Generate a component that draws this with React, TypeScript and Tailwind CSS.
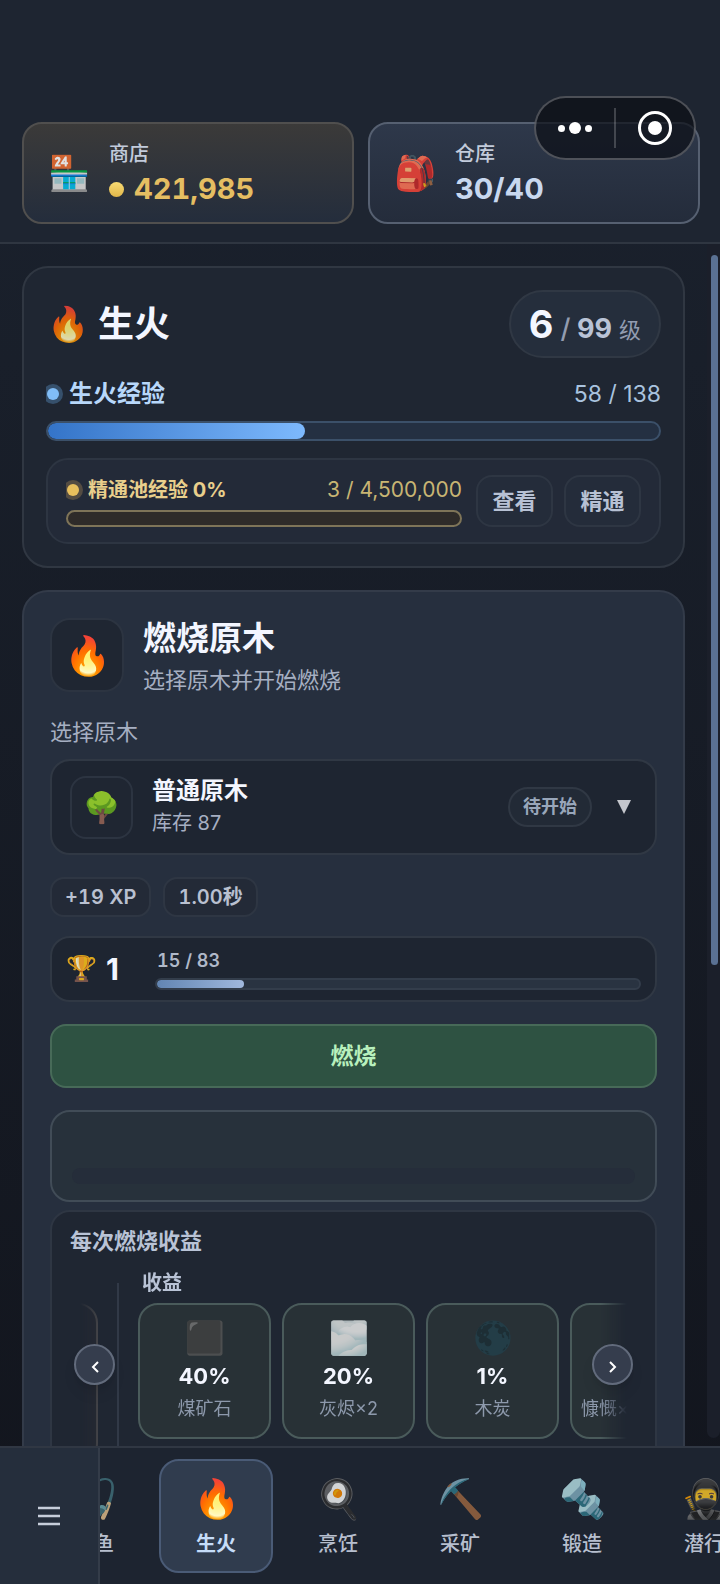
import { useState } from "react";
import { clsx } from "clsx";

type Reward = { icon?: string; chance?: string; name: string };
type Skill = { icon: string; name: string };

const rewards: Reward[] = [
	{ icon: "⬛", chance: "40%", name: "煤矿石" },
	{ icon: "🌫️", chance: "20%", name: "灰烬×2" },
	{ icon: "🌑", chance: "1%", name: "木炭" },
	{ name: "慷慨×" },
];

const skills: Skill[] = [
	{ icon: "🎣", name: "钓鱼" },
	{ icon: "🔥", name: "生火" },
	{ icon: "🍳", name: "烹饪" },
	{ icon: "⛏️", name: "采矿" },
	{ icon: "🔩", name: "锻造" },
	{ icon: "🥷", name: "潜行" },
];

const Capsule = () => (
	<div className="absolute top-24 right-6 flex h-16 w-[162px] items-center rounded-full border-2 border-white/25 bg-[#0b0e16]/70">
		<button aria-label="更多" className="flex flex-1 items-center justify-center gap-1">
			<span className="size-[7px] rounded-full bg-white" />
			<span className="size-3 rounded-full bg-white" />
			<span className="size-[7px] rounded-full bg-white" />
		</button>
		<span className="h-10 w-0.5 bg-white/20" />
		<button aria-label="关闭" className="flex flex-1 items-center justify-center">
			<span className="flex size-[34px] items-center justify-center rounded-full border-[3px] border-white">
				<span className="size-[14px] rounded-full bg-white" />
			</span>
		</button>
	</div>
);

const Header = () => (
	<header className="relative flex shrink-0 gap-[14px] border-b-2 border-[#2f3641] bg-[#1e2531] pt-[122px] pr-5 pb-[18px] pl-[22px]">
		<button className="flex h-[102px] flex-1 items-center gap-5 rounded-[20px] border-2 border-[#504f4e] bg-linear-to-b from-[#3b3a39] to-[#242d3c] px-6 text-left">
			<span className="flex w-[41px] justify-center text-[34px] leading-10 opacity-85">🏪</span>
			<span className="flex flex-col">
				<span className="text-xl leading-8 font-medium text-[#c2cbdb]">商店</span>
				<span className="flex items-center gap-2.5 text-[29px] leading-[38px] font-bold text-[#e5be62] tabular-nums">
					<span className="size-[15px] rounded-full bg-linear-to-b from-[#f9dc73] to-[#e0b64a]" />
					421,985
				</span>
			</span>
		</button>
		<button className="flex h-[102px] flex-1 items-center gap-5 rounded-[20px] border-2 border-[#566071] bg-linear-to-b from-[#2e384a] to-[#242c3b] px-6 text-left">
			<span className="flex w-[41px] justify-center text-[34px] leading-10 opacity-85">🎒</span>
			<span className="flex flex-col">
				<span className="text-xl leading-8 font-medium text-[#c2cbdb]">仓库</span>
				<span className="text-[29px] leading-[38px] font-bold text-[#c8d8ef]">30/40</span>
			</span>
		</button>
		<Capsule />
	</header>
);

const SkillCard = () => (
	<section className="rounded-[26px] border-2 border-[#303742] bg-[#1f2632] p-[22px]">
		<div className="flex h-[68px] items-center justify-between">
			<h1 className="flex items-center gap-2 text-4xl font-bold text-[#f3f6ff]">
				<span className="flex w-11 justify-center text-[34px] leading-10 opacity-85">🔥</span>
				生火
			</h1>
			<p className="flex h-full items-center rounded-full border-2 border-[#303844] bg-[#252e3c] px-[18px]">
				<span className="flex items-baseline gap-[7px]">
					<span className="text-[38px] font-bold text-[#f3f6ff]">6</span>
					<span className="text-[27px] font-bold text-[#b9c3d6]"><span className="font-medium text-[#929cb0]">/</span> 99</span>
					<span className="text-[22px] text-[#929cb0]">级</span>
				</span>
			</p>
		</div>
		<div className="mt-5 flex items-center gap-2.5 overflow-hidden text-2xl leading-8">
			<span className="ml-px size-3 rounded-full bg-[#81bdf7] ring-4 ring-[#36506c]" />
			<span className="font-bold text-[#b7d7fa]">生火经验</span>
			<span className="ml-auto text-[23px] text-[#a9c3df]">58 / 138</span>
		</div>
		<div role="progressbar" aria-label="生火经验" aria-valuenow={58} aria-valuemax={138} className="mt-[11px] h-5 overflow-hidden rounded-full border-2 border-[#3b5069] bg-[#243042]">
			<div className="h-full rounded-full bg-linear-to-r from-[#3474c8] to-[#7db9fd]" style={{ width: `${58 / 138 * 100}%` }} />
		</div>
		<div className="mt-[17px] flex gap-[14px] rounded-[22px] border-2 border-[#2d3542] bg-[#232a38] px-[18px] py-[15px]">
			<div className="flex flex-1 flex-col justify-between">
				<div className="flex items-center gap-[9px] overflow-hidden text-xl leading-[30px]">
					<span className="ml-px size-3 rounded-full bg-[#e8bf5d] ring-4 ring-[#544c42]" />
					<span className="font-bold text-[#e9cf8c]">精通池经验 0%</span>
					<span className="ml-auto text-[21px] text-[#c8b573]">3 / 4,500,000</span>
				</div>
				<div role="progressbar" aria-label="精通池经验" aria-valuenow={0} className="h-[17px] rounded-full border-2 border-[#7e7458] bg-[#2e2b29]" />
			</div>
			<div className="flex gap-[11px]">
				<button className="h-[52px] w-[77px] rounded-2xl border-2 border-[#2e3643] bg-[#242c3a] text-[22px] font-bold text-[#b7c1d4]">查看</button>
				<button className="h-[52px] w-[77px] rounded-2xl border-2 border-[#2e3643] bg-[#242c3a] text-[22px] font-bold text-[#b7c1d4]">精通</button>
			</div>
		</div>
	</section>
);

const RewardTile = ({ icon, chance, name }: Reward) => (
	<li className="flex h-[136px] w-[133px] shrink-0 flex-col items-center rounded-[20px] border-2 border-[#4a5b5b] bg-[#283136] pt-[13px]">
		<span className="h-10 text-[32px] leading-10 opacity-80">{icon}</span>
		<span className="mt-1 h-7 text-[22px] leading-7 font-bold text-[#f3f6ff]">{chance}</span>
		<span className={clsx("mt-1 text-lg leading-[30px] whitespace-nowrap text-[#8d99ac]", !chance && "self-start pl-[9px]")}>{name}</span>
	</li>
);

const ScrollButton = ({ label, path, side }: { label: string; path: string; side: string }) => (
	<button aria-label={label} className={clsx("absolute top-[73px] flex size-[41px] items-center justify-center rounded-full border-2 border-[#626b7c] bg-[#353d4d] shadow-lg", side)}>
		<svg viewBox="0 0 8 12" className="mt-1 h-3 w-2 fill-none stroke-white stroke-2"><path d={path} /></svg>
	</button>
);

const Rewards = () => (
	<div className="mt-2 rounded-[20px] border-2 border-[#2e3643] bg-[#1f2632] px-[18px] pt-[14px] pb-5">
		<h3 className="text-[22px] leading-[30px] font-semibold text-[#b9c3d6]">每次燃烧收益</h3>
		<div className="relative mt-[15px]">
			<div className="flex overflow-hidden mask-[linear-gradient(to_right,transparent_10px,black_32px,black_calc(100%-36px),transparent_calc(100%-10px))]">
				<div className="-ml-[105px] w-[133px] shrink-0 pt-8">
					<div className="h-40 rounded-[20px] border-2 border-[#4b4a4c] bg-[#262932]" />
				</div>
				<div className="mx-[19px] my-3 w-0.5 shrink-0 bg-[#313947]" />
				<div>
					<h4 className="pl-1 text-xl leading-6 font-semibold text-[#b9c3d6]">收益</h4>
					<ul className="mt-2 flex gap-[11px]">
						{rewards.map(reward => <RewardTile key={reward.name} {...reward} />)}
					</ul>
				</div>
			</div>
			<ScrollButton label="向左" side="left-1" path="M7 1 2 6l5 5" />
			<ScrollButton label="向右" side="right-1" path="M1 1l5 5-5 5" />
		</div>
	</div>
);

const BurnCard = () => (
	<section className="mt-[22px] rounded-[26px] border-2 border-[#333b49] bg-[#262f3e] px-[26px] pt-6 pb-[26px]">
		<div className="flex items-start gap-[19px]">
			<span className="mt-0.5 flex size-[74px] items-center justify-center rounded-[20px] border-2 border-[#2c3441] bg-[#1f2632] text-[38px]">🔥</span>
			<div>
				<h2 className="text-[33px] leading-[44px] font-bold text-[#f3f6ff]">燃烧原木</h2>
				<p className="text-[22px] leading-10 text-[#a6afc2]">选择原木并开始燃烧</p>
			</div>
		</div>
		<label htmlFor="log" className="mt-[14px] block text-[22px] leading-9 text-[#a6afc2]">选择原木</label>
		<div className="mt-[9px] flex h-24 items-center gap-[19px] rounded-[20px] border-2 border-[#303844] bg-[#1e2531] px-[18px]">
			<span className="flex size-[63px] items-center justify-center rounded-2xl border-2 border-[#2c3441] bg-[#1f2632] text-[30px]">🌳</span>
			<div className="flex-1">
				<select id="log" className="block w-full appearance-none bg-transparent text-2xl leading-8 font-bold text-[#f3f6ff] outline-none">
					<option>普通原木</option>
				</select>
				<p className="text-xl leading-8 text-[#a6afc2]">库存 87</p>
			</div>
			<span className="flex h-10 w-[84px] items-center justify-center rounded-full border-2 border-[#303844] bg-[#222a36] text-lg font-bold text-[#98a6ba]">待开始</span>
			<svg viewBox="0 0 14 14" className="mr-1.5 ml-1.5 size-[14px] fill-[#c5c7cd]"><path d="M0 0h14L7 14z" /></svg>
		</div>
		<div className="mt-[22px] flex gap-3">
			<span className="flex h-10 items-center rounded-[14px] border-2 border-[#2e3643] bg-[#232a37] px-[13px] text-xl font-semibold text-[#b9c0d0] tabular-nums">+19 XP</span>
			<span className="flex h-10 items-center rounded-[14px] border-2 border-[#2e3643] bg-[#232a37] px-[13px] text-xl font-semibold text-[#b9c0d0] tabular-nums">1.00秒</span>
		</div>
		<div className="mt-[19px] flex h-[66px] items-center rounded-[20px] border-2 border-[#303844] bg-[#1e2531] px-[14px]">
			<span className="w-10 text-[25px] opacity-85">🏆</span>
			<span className="w-[49px] text-[30px] font-bold text-[#f3f6ff]">1</span>
			<div className="flex-1">
				<p className="pl-0.5 text-lg leading-[27px] font-semibold text-[#b0b9c9] tabular-nums">15 / 83</p>
				<div role="progressbar" aria-label="精通等级" aria-valuenow={15} aria-valuemax={83} className="mt-1 mb-0.5 h-3 overflow-hidden rounded-full border-2 border-[#333d4b] bg-[#293341]">
					<div className="h-full rounded-full bg-linear-to-r from-[#6285b2] to-[#a0b8dd]" style={{ width: `${15 / 83 * 100}%` }} />
				</div>
			</div>
		</div>
		<button className="mt-[22px] block h-16 w-full rounded-2xl border-2 border-[#476a58] bg-[#2e5242] text-[23px] font-semibold text-[#b8f0bd]">燃烧</button>
		<div className="mt-[22px] flex h-[92px] flex-col justify-end rounded-[20px] border-2 border-[#414c57] bg-[#27313b] px-5 pb-4">
			<div role="progressbar" aria-label="燃烧进度" aria-valuenow={0} className="h-4 rounded-full bg-[#252d3a]" />
		</div>
		<Rewards />
	</section>
);

const Navigation = () => {
	const [active, setActive] = useState("生火")

	return (
		<nav className="flex h-[138px] shrink-0 border-t-2 border-[#303743] bg-[#1d2430]">
			<button aria-label="菜单" className="flex w-[100px] shrink-0 items-center justify-center border-r-2 border-[#343c49] bg-[#252e3c]">
				<svg viewBox="0 0 22 20" className="h-5 w-[22px] stroke-[#c7cedb] stroke-[2.5]"><path d="M0 2h22M0 10h22M0 18h22" /></svg>
			</button>
			<div className="flex flex-1 overflow-hidden">
				<div className="-ml-[63px] flex gap-2 pt-[11px]">
					{skills.map(({ icon, name }) => (
						<button
							key={name}
							onClick={() => setActive(name)}
							className={clsx(
								"flex size-[114px] shrink-0 flex-col items-center rounded-[20px] border-2 pt-3 text-xl",
								active === name ? "border-[#4a5b76] bg-[#303c4e] font-bold text-[#c5dcf8]" : "border-transparent font-medium text-[#b7bfce]"
							)}
						>
							<span className={clsx("h-[51px] text-[38px] leading-[51px]", active !== name && "opacity-80")}>{icon}</span>
							<span className="mt-1 leading-8">{name}</span>
						</button>
					))}
				</div>
			</div>
		</nav>
	)
}

export default function App() {
	return (
		<div className="flex h-screen flex-col overflow-hidden bg-linear-to-b from-[#1b222e] to-[#12151d] font-[Inter,'Noto_Sans_CJK_SC',sans-serif]">
			<Header />
			<main className="flex min-h-0 flex-1">
				<div className="flex-1 overflow-y-auto px-[22px] pt-[22px] [scrollbar-width:none]">
					<SkillCard />
					<BurnCard />
				</div>
				<div className="mb-2 flex w-[13px] flex-col items-center rounded-b-full bg-[#1b1f2a] pt-[11px] pl-0.5">
					<div className="h-3/5 w-[7px] rounded-full bg-[#5a7193]" />
				</div>
			</main>
			<Navigation />
		</div>
	)
}
